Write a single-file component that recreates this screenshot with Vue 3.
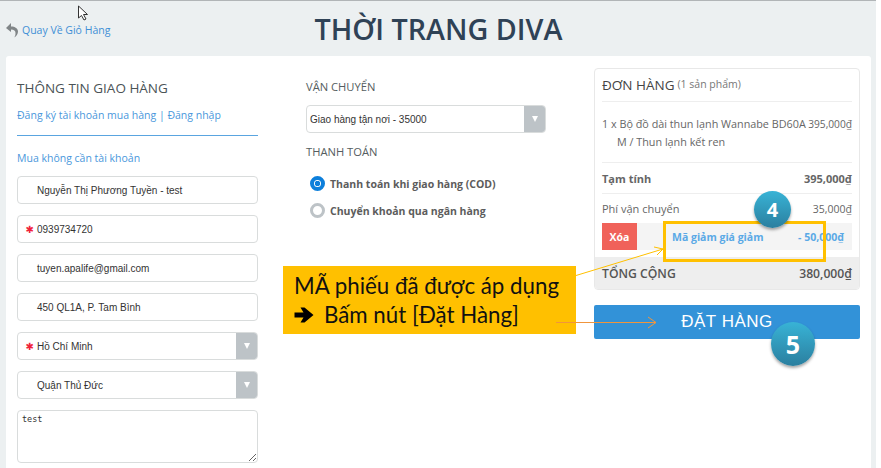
<script setup>
const fields = [
  { text: "Nguyễn Thị Phương Tuyền - test" },
  { text: "0939734720", required: true },
  { text: "tuyen.apalife@gmail.com" },
  { text: "450 QL1A, P. Tam Bình" },
  { text: "Hồ Chí Minh", required: true, select: true },
  { text: "Quận Thủ Đức", select: true },
];
</script>

<template>
  <div class="page">
    <header class="top">
      <a class="back">
        <svg width="12" height="16" viewBox="0 0 12 16">
          <path d="M5 1 L0 6 L5 10 L5 7.5 C8 7.5 9.5 9 9.5 11 C9.5 13 9 14.5 8 15.5 C10.5 14.5 12 12 12 9.5 C12 6.5 9 4.5 5 4.5 Z" fill="#808587" />
        </svg>
        Quay Về Giỏ Hàng
      </a>
      <h1>THỜI TRANG DIVA</h1>
    </header>

    <main class="panel">
      <section class="col-left">
        <h2>THÔNG TIN GIAO HÀNG</h2>
        <p class="link login">Đăng ký tài khoản mua hàng | Đăng nhập</p>
        <p class="link guest">Mua không cần tài khoản</p>
        <div class="fields">
          <div v-for="f in fields" :key="f.text" class="field">
            <span class="star">{{ f.required ? "✱" : "" }}</span>
            <span class="value">{{ f.text }}</span>
            <span v-if="f.select" class="caret"><i></i></span>
          </div>
          <textarea class="note" readonly>test</textarea>
        </div>
      </section>

      <section class="col-mid">
        <h2>VẬN CHUYỂN</h2>
        <div class="field ship">
          <span class="value">Giao hàng tận nơi - 35000</span>
          <span class="caret"><i></i></span>
        </div>
        <h2 class="pay-title">THANH TOÁN</h2>
        <div class="radio on"><i></i>Thanh toán khi giao hàng (COD)</div>
        <div class="radio"><i></i>Chuyển khoản qua ngân hàng</div>
      </section>

      <section class="col-right">
        <div class="card">
          <div class="card-head"><b>ĐƠN HÀNG</b> <span>(1 sản phẩm)</span></div>
          <div class="item">
            <div class="item-line"><span>1 x Bộ đồ dài thun lạnh Wannabe BD60A</span><span class="item-price">395,000₫</span></div>
            <div class="item-sub">M / Thun lạnh kết ren</div>
          </div>
          <div class="row subtotal"><span>Tạm tính</span><span>395,000₫</span></div>
          <div class="row fee"><span>Phí vận chuyển</span><span class="price">35,000₫</span></div>
          <div class="coupon">
            <button class="remove">Xóa</button>
            <span class="coupon-name">Mã giảm giá giảm</span>
            <span class="coupon-value">- 50,000₫</span>
          </div>
          <div class="total"><span>TỔNG CỘNG</span><span>380,000₫</span></div>
        </div>
        <button class="order">ĐẶT HÀNG</button>
      </section>
    </main>

    <!-- annotations drawn over the screenshot -->
    <div class="callout">
      <div>MÃ phiếu đã được áp dụng</div>
      <div class="callout-2">
        <svg width="21" height="16" viewBox="0 0 20 16">
          <path d="M0 5.5 H9 L6 0.5 H10 L19 8 L10 15.5 H6 L9 10.5 H0 Z" fill="#000" />
        </svg>
        Bấm nút [Đặt Hàng]
      </div>
    </div>
    <svg class="overlay" width="881" height="468" viewBox="0 0 881 468">
      <path d="M576 275.5 L663 249 M654 247 L663 249 L657 255" fill="none" stroke="#ffc000" stroke-width="1" />
      <path d="M556 322.5 L656 322.5 M648 317 L656 322.5 L648 328" fill="none" stroke="#f0953c" stroke-width="1" />
      <path d="M78.5 6 L78.5 18 L81.5 15.5 L84 20 L86 19 L83.5 14.5 L87.5 14.5 Z" fill="#fff" stroke="#333" stroke-width="1" />
    </svg>
    <div class="coupon-box"></div>
    <div class="badge b4">4</div>
    <div class="badge b5">5</div>
  </div>
</template>

<style>
html,
body {
  margin: 0;
  overflow: hidden;
  background: #fff;
}
</style>

<style scoped>
.page {
  position: relative;
  width: 876px;
  height: 468px;
  box-sizing: border-box;
  background: #ecf0f1;
  border-top: 1px solid #b1b5b7;
  font-family: "Open Sans", "Liberation Sans", sans-serif;
  overflow: hidden;
  color: #555;
}

.top {
  position: relative;
  height: 55px;
  display: flex;
  justify-content: center;
  align-items: center;
}

.top h1 {
  margin: 0 0 0 1px;
  font-size: 28.7px;
  font-weight: 600;
  line-height: 54px;
  color: #2f4256;
}

.back {
  position: absolute;
  left: 6px;
  top: 21px;
  display: flex;
  align-items: center;
  gap: 4px;
  font-size: 10.5px;
  color: #3f8fd6;
}

.panel {
  display: flex;
  margin: 0 5px 0 6px;
  height: 412px;
  background: #fff;
  border-radius: 3px 3px 0 0;
}

h2 {
  margin: 0;
  font-weight: 400;
}

.col-left {
  width: 241px;
  margin-left: 11px;
}

.col-left h2 {
  margin-top: 23px;
  font-size: 13.5px;
  line-height: 18px;
  color: #4b5356;
}

.link {
  margin: 0;
  font-size: 10.5px;
  color: #4a97dc;
}

.login {
  margin-top: 10px;
  line-height: 16px;
  padding-bottom: 12px;
  border-bottom: 1px solid #5aa5e0;
}

.guest {
  margin-top: 14px;
  line-height: 16px;
}

.fields {
  margin-top: 10px;
  display: flex;
  flex-direction: column;
  gap: 11px;
}

.field {
  display: flex;
  align-items: center;
  box-sizing: border-box;
  height: 28px;
  border: 1px solid #d9dcdc;
  border-radius: 4px;
  font-family: "Liberation Sans", Arial, sans-serif;
  font-size: 10px;
  color: #333;
  background: #fff;
  overflow: hidden;
}

.star {
  width: 19px;
  flex: none;
  text-align: right;
  padding-right: 3px;
  box-sizing: border-box;
  color: #f0233c;
  font-family: "DejaVu Sans", sans-serif;
  font-size: 10px;
  font-weight: 700;
}

.value {
  flex: 1;
}

.caret {
  flex: none;
  width: 21px;
  height: 100%;
  background: #bdc3c7;
  display: flex;
  align-items: center;
  justify-content: center;
}

.caret i {
  display: block;
  width: 0;
  height: 0;
  border-left: 3.5px solid transparent;
  border-right: 3.5px solid transparent;
  border-top: 6px solid #fff;
}

.note {
  box-sizing: border-box;
  display: block;
  width: 100%;
  height: 53px;
  padding: 3px 4px;
  border: 1px solid #d9dcdc;
  border-radius: 4px;
  font-family: "DejaVu Sans Mono", monospace;
  font-size: 8.5px;
  line-height: 11px;
  color: #333;
  outline: none;
}

.col-mid {
  width: 240px;
  margin-left: 48px;
}

.col-mid h2 {
  margin-top: 22px;
  font-size: 11.2px;
  line-height: 18px;
  color: #555d60;
}

.ship {
  margin-top: 9px;
}

.ship .value {
  padding-left: 3px;
}

.col-mid .pay-title {
  margin-top: 10px;
}

.radio {
  display: flex;
  align-items: center;
  gap: 5px;
  height: 27px;
  padding-left: 4px;
  font-size: 10.5px;
  font-weight: 700;
  color: #5c5c5c;
}

.pay-title + .radio {
  margin-top: 9px;
}

.radio i {
  box-sizing: border-box;
  width: 15px;
  height: 15px;
  border-radius: 50%;
  border: 3px solid #bdc3c7;
  background: #fff;
}

.radio.on i {
  border: 4px solid #0d7fdb;
  background: radial-gradient(circle, #0d7fdb 0 2.5px, #fff 3px);
}

.col-right {
  width: 266px;
  margin-left: 48px;
  padding-top: 12px;
}

.card {
  box-sizing: border-box;
  height: 222px;
  border: 1px solid #e8e8e8;
  border-radius: 4px;
  overflow: hidden;
  font-size: 11px;
  color: #666;
  display: flex;
  flex-direction: column;
}

.card-head {
  margin: 0 7px;
  height: 32px;
  display: flex;
  align-items: center;
  gap: 3px;
  border-bottom: 1px solid #eee;
}

.card-head b {
  font-size: 13.5px;
  font-weight: 400;
  color: #444;
}

.card-head span {
  font-size: 10.5px;
  color: #777;
  position: relative;
  top: -1px;
}

.item {
  margin: 0 7px;
  height: 61px;
  box-sizing: border-box;
  padding-top: 13px;
  border-bottom: 1px solid #eee;
  line-height: 18px;
  font-size: 10.8px;
}

.item-line {
  display: flex;
  justify-content: space-between;
  white-space: nowrap;
}

.item-price {
  font-size: 10.2px;
}

.price {
  font-size: 10.5px;
}

.item-sub {
  padding-left: 15px;
}

.row {
  margin: 0 7px;
  display: flex;
  justify-content: space-between;
  align-items: center;
}

.subtotal {
  height: 30px;
  font-weight: 700;
  border-bottom: 1px solid #eee;
}

.fee {
  height: 29px;
}

.coupon {
  margin: 0 7px;
  height: 27px;
  display: flex;
  align-items: center;
  background: #f4f4f4;
  font-weight: 700;
  color: #5aa9e6;
}

.remove {
  width: 35px;
  height: 27px;
  border: 0;
  padding: 0;
  background: #f0625a;
  color: #fff;
  font-family: inherit;
  font-size: 10.5px;
  font-weight: 700;
}

.coupon-name {
  margin-left: 35px;
  font-size: 10.5px;
}

.coupon-value {
  margin-left: auto;
  margin-right: 8px;
  font-size: 10.5px;
}

.total {
  margin-top: auto;
  height: 32px;
  padding: 0 7px;
  display: flex;
  justify-content: space-between;
  align-items: center;
  background: #eee;
  font-size: 12.2px;
  font-weight: 600;
  color: #555;
}

.order {
  display: block;
  width: 100%;
  height: 34px;
  margin-top: 15px;
  border: 0;
  border-radius: 2px;
  background: #3292d8;
  color: #fff;
  font-family: "Liberation Sans", Arial, sans-serif;
  font-size: 17px;
  letter-spacing: 0.5px;
  padding-top: 1px;
}

.overlay {
  position: absolute;
  left: 0;
  top: -1px;
  pointer-events: none;
}

.coupon-box {
  position: absolute;
  left: 663px;
  top: 220px;
  width: 163px;
  height: 41px;
  box-sizing: border-box;
  border: 3px solid #ffc000;
}

.badge {
  position: absolute;
  border-radius: 50%;
  display: flex;
  align-items: center;
  justify-content: center;
  background: linear-gradient(#38b3d6, #2b7f9f);
  box-shadow: 0 2px 3px rgba(0, 0, 0, 0.35);
  color: #fff;
  font-weight: 700;
}

.b4 {
  left: 754px;
  top: 190px;
  width: 37px;
  height: 37px;
  font-size: 20px;
}

.b5 {
  left: 771px;
  top: 321px;
  width: 44px;
  height: 44px;
  font-size: 25px;
}

.callout {
  position: absolute;
  left: 283px;
  top: 265px;
  width: 293px;
  height: 68px;
  box-sizing: border-box;
  padding: 5px 11px;
  background: #ffc000;
  color: #111;
  font-family: Lato, "Open Sans", sans-serif;
  font-size: 22.3px;
  line-height: 29px;
}

.callout-2 {
  display: flex;
  align-items: center;
  gap: 9px;
  white-space: nowrap;
}
</style>
